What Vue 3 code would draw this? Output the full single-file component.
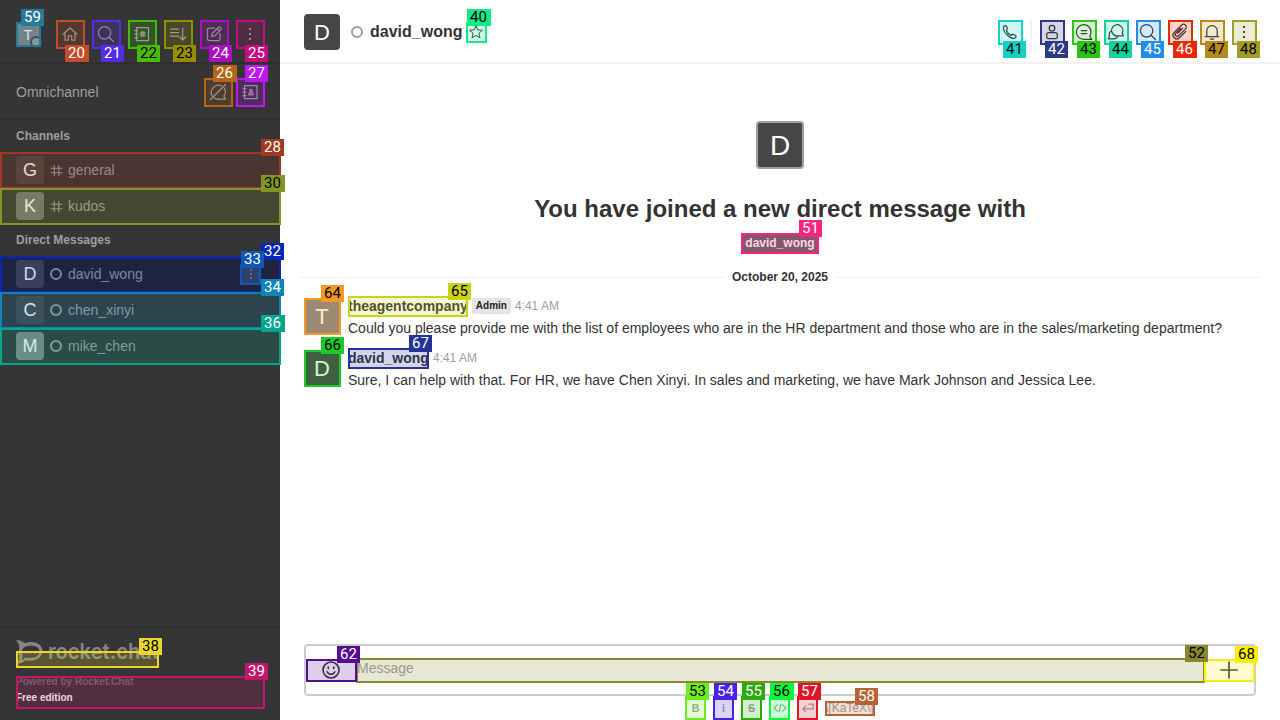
<script setup>
const icons = {
  home: 'M3 10.2 10 4l7 6.2M5 9.5V16h3.3v-4.2h3.4V16H15V9.5',
  search: 'M14.8 8.8a6.2 6.2 0 1 1-12.4 0a6.2 6.2 0 1 1 12.4 0M13.2 13.4l4.300 4.100',
  directory: 'M4.5 3.5h12v13h-12zM3 6.5h3M3 10h3M3 13.5h3M9.6 7.4v5.2M11.800 7.400v5.200M8.300 8.800h4.800M8.300 11.200h4.800',
  sort: 'M2.5 5h8M2.5 8.5h8M2.5 12h8M14.7 4v12M11.7 13l3 3 3-3',
  edit: 'M10.5 4H5a1.5 1.5 0 0 0-1.5 1.5V15A1.5 1.5 0 0 0 5 16.5h9.5A1.5 1.5 0 0 0 16 15V9.5M7.5 12.5l.7-3 6.3-6.3q1.2-.8 2.2.2t.2 2.2l-6.3 6.3zM13.3 4.5l2.3 2.3',
  chatOff: 'M13.5 3.8A7.3 7.3 0 0 0 4.2 14M6 16a7.5 7.5 0 0 0 5.5 1h5.7l-1.3-2.8a7.3 7.3 0 0 0 .6-7.8M2.5 17.5 17.5 2.5',
  contacts: 'M4.5 3.5h12.500v13h-12.500zM3 6.5h3M3 10h3M3 13.5h3M8.800 12.800v-1l1-1h2.400l1 1v1zM12.2 8.6a1.200 1.200 0 1 1-2.400 0a1.200 1.200 0 1 1 2.400 0',
  star: 'M10 2 12.200 7.300l5.800.5-4.400 3.800 1.400 5.700-5-3.100-5 3.100 1.400-5.700L2 7.800l5.800-.5z',
  phone: 'M3.6 4.5c1.5-1.7 2.8-1 3.6 1.2.5 1.3.1 1.7-.9 2.5.8 2.4 2.4 4.1 4.9 5.2.8-1.3 1.4-1.4 2.7-.8 2.4 1 2.8 2 1.3 3.3C11.8 18.3 2.1 10.2 3.6 4.5z',
  user: 'M12.8 6.2a2.8 2.8 0 1 1-5.6 0a2.8 2.8 0 1 1 5.6 0M4.7 15v-2.3q0-2 2-2h6.6q2 0 2 2V15q0 1.5-1.5 1.5H6.2q-1.5 0-1.5-1.5z',
  thread: 'M17 10a7 7 0 0 1-1.3 4.1L17.8 17.300H10a7.300 7.300 0 1 1 7-7.300zM7.2 8.5h5.6M7.2 11.5h5.6',
  discussion: 'M7.2 12.2A5.6 5.6 0 1 1 16.2 11l1.3 2.8H12a5.6 5.6 0 0 1-4.800-1.600M5.5 9A4.2 4.2 0 0 0 3.5 14l-1.2 2.800h5.500a5 5 0 0 0 4.300-2.800',
  clip: 'M10.5 6.3 5.8 11c-2 2 .8 4.8 2.8 2.8l6.7-6.700c2.900-2.900-1.100-6.600-3.900-3.900L4.2 10.400c-3.600 3.600 1.700 8.900 5.300 5.300l6.200-6.200M12.600 6.200 7.600 11.200',
  bell: 'M4.8 14.3V8.800a5.200 5.200 0 0 1 10.400 0v5.500M3.200 14.500h13.600M8.400 16.800q1.600 1.300 3.200 0',
  hash: 'M6.500 2v16M13.500 2v16M1.500 6.500h17M1.500 13.500h17',
  smile: 'M18 10a8 8 0 1 1-16 0a8 8 0 1 1 16 0M6.2 11.8a4.1 4.1 0 0 0 7.6 0M7.3 7v1.5M12.7 7v1.5',
  plus: 'M10 2v16M2 10h16',
  code: 'M6 5.5 1.500 10l4.500 4.500M14 5.5l4.500 4.500-4.500 4.500M11.5 4l-3 12',
  enter: 'M7 7 2.500 11.200l4.500 4.300M2.500 11.200H17.500V4.500H11'
}
const kebab = 'M10 4v2M10 9v2M10 14v2'
const navIcons = ['home', 'search', 'directory', 'sort', 'edit', 'kebab']
const roomIcons = ['user', 'thread', 'discussion', 'search', 'clip', 'bell', 'kebab']
const path = (n) => (n === 'kebab' ? kebab : icons[n])

const channels = [
  { name: 'general', letter: 'G', tone: 'dark' },
  { name: 'kudos', letter: 'K', tone: 'mid' }
]
const directs = [
  { name: 'david_wong', letter: 'D', tone: 'dark', active: true },
  { name: 'chen_xinyi', letter: 'C', tone: 'dark' },
  { name: 'mike_chen', letter: 'M', tone: 'light' }
]
const messages = [
  { user: 'theagentcompany', letter: 'T', tone: 'light', role: 'Admin', text: 'Could you please provide me with the list of employees who are in the HR department and those who are in the sales/marketing department?' },
  { user: 'david_wong', letter: 'D', tone: 'dark', text: 'Sure, I can help with that. For HR, we have Chen Xinyi. In sales and marketing, we have Mark Johnson and Jessica Lee.' }
]

// id, left, top, right, bottom, colour, tag left, tag top, dark tag text
const marks = [
  [59, 16, 22, 41, 47, '#28789a', 21, 9, 0],
  [20, 56, 20, 85, 49, '#c34d2a', 65, 45, 0],
  [21, 92, 20, 121, 49, '#552be8', 101, 45, 0],
  [22, 128, 20, 157, 49, '#45bd07', 137, 45, 1],
  [23, 164, 20, 193, 49, '#958e03', 173, 45, 1],
  [24, 200, 20, 229, 49, '#af0dc5', 209, 45, 0],
  [25, 236, 20, 265, 49, '#c40d81', 245, 45, 0],
  [26, 204, 78, 233, 107, '#b56518', 213, 65, 0],
  [27, 236, 78, 265, 107, '#c015f5', 245, 65, 0],
  [28, 0, 152, 281, 189, '#a03822', 261, 139, 0],
  [30, 0, 188, 281, 225, '#849527', 261, 175, 1],
  [32, 0, 256, 281, 293, '#0b25b5', 261, 243, 0],
  [33, 240, 264, 261, 285, '#1356ba', 241, 251, 0],
  [34, 0, 292, 281, 329, '#1084b9', 261, 279, 0],
  [36, 0, 328, 281, 365, '#04a78c', 261, 315, 0],
  [38, 16, 651, 159, 668, '#ead62c', 139, 638, 1],
  [39, 16, 676, 265, 709, '#c3176c', 245, 663, 0],
  [40, 466, 22, 487, 43, '#13eb88', 467, 9, 1],
  [41, 998, 20, 1023, 45, '#12d2c5', 1003, 41, 1],
  [42, 1040, 20, 1065, 45, '#2c3988', 1045, 41, 0],
  [43, 1072, 20, 1097, 45, '#2bc514', 1077, 41, 1],
  [44, 1104, 20, 1129, 45, '#12d399', 1109, 41, 1],
  [45, 1136, 20, 1161, 45, '#218be8', 1141, 41, 0],
  [46, 1168, 20, 1193, 45, '#e62905', 1173, 41, 0],
  [47, 1200, 20, 1225, 45, '#b68b1b', 1205, 41, 1],
  [48, 1232, 20, 1257, 45, '#a09e27', 1237, 41, 1],
  [51, 741, 233, 819, 254, '#fc2280', 799, 220, 0],
  [64, 304, 298, 341, 335, '#f49a24', 321, 285, 1],
  [65, 348, 296, 468, 317, '#c8d415', 448, 283, 1],
  [66, 304, 350, 341, 387, '#1cca26', 321, 337, 1],
  [67, 348, 348, 429, 369, '#25329a', 409, 335, 0],
  [52, 356, 658, 1205, 683, '#87872b', 1185, 645, 1],
  [62, 306, 659, 357, 682, '#560c91', 337, 646, 0],
  [68, 1204, 659, 1255, 682, '#fcec0d', 1235, 646, 1],
  [53, 685, 696, 706, 720, '#6bed22', 686, 683, 1],
  [54, 713, 696, 734, 720, '#4821e8', 714, 683, 0],
  [55, 741, 696, 762, 720, '#2aab0d', 742, 683, 1],
  [56, 769, 696, 790, 720, '#09f837', 770, 683, 1],
  [57, 797, 696, 818, 720, '#dc1528', 798, 683, 0],
  [58, 825, 701, 875, 716, '#b66332', 855, 688, 0]
].map((m) => (m[0] === 55 ? [...m.slice(0, 8), 0] : m))
const wide = new Set([20, 26, 30, 36, 40, 46, 56])
const px = (n) => n + 'px'
</script>

<template>
  <div class="app">
    <aside class="sidebar">
      <header class="nav">
        <div class="avatar small light">T<i class="presence"></i></div>
        <div class="nav-icons">
          <svg v-for="n in navIcons" :key="n" class="icon" :class="{ kebab: n === 'kebab' }" viewBox="0 0 20 20"><path :d="path(n)" /></svg>
        </div>
      </header>
      <section class="omni">
        <span>Omnichannel</span>
        <div class="omni-icons">
          <svg class="icon" viewBox="0 0 20 20"><path :d="icons.chatOff" /></svg>
          <svg class="icon" viewBox="0 0 20 20"><path :d="icons.contacts" /></svg>
        </div>
      </section>
      <nav class="rooms">
        <h3>Channels</h3>
        <div v-for="c in channels" :key="c.name" class="row">
          <div class="avatar list" :class="c.tone">{{ c.letter }}</div>
          <svg class="row-icon" viewBox="0 0 20 20"><path :d="icons.hash" /></svg>
          <span>{{ c.name }}</span>
        </div>
        <h3>Direct Messages</h3>
        <div v-for="c in directs" :key="c.name" class="row" :class="{ active: c.active }">
          <div class="avatar list" :class="c.tone">{{ c.letter }}</div>
          <i class="status"></i>
          <span>{{ c.name }}</span>
          <div v-if="c.active" class="row-menu"><svg class="kebab" viewBox="0 0 20 20"><path :d="kebab" /></svg></div>
        </div>
      </nav>
      <footer class="side-foot">
        <svg class="logo" viewBox="0 0 144 26">
          <path class="logo-shape" d="M0 0Q5 0 9 3Q18 0 24 5Q29 11 24 17Q18 22 9 20.500Q5 24.500 0 23.500Q4 20 3 16Q1.500 12 3.500 8Q3 3 0 0Z" />
          <path class="logo-hole" d="M6 11.500Q6 6 15 5.500Q23.500 6 23.500 11.500Q23 18 14 17.800Q11 18 9.500 17.300Q7.500 20 5.500 20Q7.500 17 6 11.500Z" />
          <path class="logo-dots" d="M10 12.500h.1M14.500 12.500h.1M19 12.500h.1" />
          <text x="32" y="18.500" textLength="111" lengthAdjust="spacingAndGlyphs">rocket.chat</text>
        </svg>
        <p class="powered">Powered by Rocket.Chat</p>
        <p class="edition">Free edition</p>
      </footer>
    </aside>

    <main class="room">
      <header class="room-head">
        <div class="avatar head dark">D</div>
        <i class="status light-status"></i>
        <h1>david_wong</h1>
        <svg class="star" viewBox="0 0 20 20"><path :d="icons.star" /></svg>
        <div class="room-icons">
          <svg class="icon" viewBox="0 0 20 20"><path :d="icons.phone" /></svg>
          <i class="sep"></i>
          <svg v-for="n in roomIcons" :key="n" class="icon" :class="{ kebab: n === 'kebab' }" viewBox="0 0 20 20"><path :d="path(n)" /></svg>
        </div>
      </header>

      <section class="feed">
        <div class="intro">
          <div class="avatar big dark">D</div>
          <h2>You have joined a new direct message with</h2>
          <span class="user-tag">david_wong</span>
        </div>
        <div class="divider"><span>October 20, 2025</span></div>
        <article v-for="m in messages" :key="m.user" class="message">
          <div class="avatar msg" :class="m.tone">{{ m.letter }}</div>
          <div class="body">
            <div class="meta"><b>{{ m.user }}</b><em v-if="m.role">{{ m.role }}</em><time>4:41 AM</time></div>
            <p>{{ m.text }}</p>
          </div>
        </article>
      </section>

      <div class="composer">
        <div class="emoji"><svg class="icon" viewBox="0 0 20 20"><path :d="icons.smile" /></svg></div>
        <div class="input">Message</div>
        <div class="add"><svg class="icon" viewBox="0 0 20 20"><path :d="icons.plus" /></svg></div>
      </div>
      <div class="format">
        <span class="fmt">B</span><span class="fmt">i</span><span class="fmt strike">S</span>
        <span class="fmt"><svg viewBox="0 0 20 20"><path :d="icons.code" /></svg></span>
        <span class="fmt"><svg viewBox="0 0 20 20"><path :d="icons.enter" /></svg></span>
        <span class="katex">\[KaTeX\]</span>
      </div>
    </main>

    <div class="marks">
      <div v-for="m in marks" :key="m[0]" class="mark" :style="{ left: px(m[1]), top: px(m[2]), width: px(m[3] - m[1]), height: px(m[4] - m[2]), borderColor: m[5], backgroundColor: m[5] + '33' }"></div>
      <div v-for="m in marks" :key="'t' + m[0]" class="mark-tag" :class="{ ink: m[8], wide: wide.has(m[0]) }" :style="{ left: px(m[6]), top: px(m[7]), backgroundColor: m[5] }">{{ m[0] }}</div>
    </div>
  </div>
</template>

<style>
body { overflow: hidden; background: #fff; }
</style>

<style scoped>
* { box-sizing: border-box; }
.app { position: relative; display: flex; width: 1280px; height: 720px; overflow: hidden; font-family: "Liberation Sans", Arial, sans-serif; font-size: 14px; color: #333; }
h1, h2, h3, p { margin: 0; }
svg { display: block; flex: none; fill: none; stroke: currentColor; stroke-width: 1.25; stroke-linecap: round; stroke-linejoin: round; }
.icon { width: 20px; height: 20px; }
.kebab { stroke-width: 2; stroke-linecap: butt; }
.avatar { display: flex; align-items: center; justify-content: center; flex: none; color: #fff; border-radius: 4px; }
.dark { background: #464646; }
.mid { background: #757575; }
.light { background: #868686; }

.sidebar { display: flex; flex-direction: column; width: 280px; height: 720px; background: #353535; color: #9e9e9e; }
.nav { display: flex; align-items: center; height: 64px; padding: 4px 16px 0; border-bottom: 2px solid #2f2f2f; }
.small { position: relative; width: 24px; height: 24px; margin-top: 4px; font-size: 14px; border-radius: 2px; }
.presence { position: absolute; right: -2px; bottom: -1px; width: 12px; height: 12px; border: 2px solid #454545; border-radius: 50%; background: #9e9e9e; }
.nav-icons { display: flex; gap: 16px; margin-left: 20px; padding-top: 2px; }
.omni { display: flex; align-items: center; justify-content: space-between; height: 56px; padding: 2px 20px 0 16px; border-bottom: 2px solid #2f2f2f; }
.omni-icons { display: flex; gap: 12px; }
.rooms { flex: 1; }
h3 { height: 32px; padding-left: 16px; font-size: 12px; line-height: 32px; }
.row { display: flex; align-items: center; height: 36px; padding: 0 19px 0 16px; }
.active { background: #242424; }
.list { width: 28px; height: 28px; font-size: 18px; margin-right: 6px; }
.row-icon { width: 13px; height: 13px; margin-right: 5px; stroke-width: 1.7; }
.status { flex: none; width: 12px; height: 12px; border: 2px solid #9e9e9e; border-radius: 50%; margin-right: 6px; }
.row-menu { display: flex; align-items: center; justify-content: center; width: 21px; height: 21px; margin-left: auto; background: #424242; }
.row-menu svg { width: 16px; height: 16px; stroke-width: 2.500; }
.side-foot { height: 94px; padding: 12px 16px 0; border-top: 2px solid #2f2f2f; font-size: 10px; font-weight: bold; }
.logo { width: 144px; height: 26px; color: #858585; overflow: visible; }
.logo-shape { fill: currentColor; stroke: none; }
.logo-hole { fill: #353535; stroke: none; }
.logo-dots { stroke-width: 2.5; }
.logo text { fill: currentColor; stroke: none; font-family: Inter, "Open Sans", sans-serif; font-size: 22px; font-weight: 600; }
.powered { margin-top: 8px; line-height: 16px; color: #6c6c6c; }
.edition { line-height: 16px; color: #fff; }

.room { display: flex; flex-direction: column; width: 1000px; height: 720px; }
.room-head { display: flex; align-items: center; height: 64px; flex: none; padding: 0 26px 0 24px; border-bottom: 2px solid #f2f2f2; }
.head { width: 36px; height: 36px; font-size: 22px; margin: 2px 11px 0 0; padding-top: 1px; }
.light-status { margin: 2px 7px 0 0; }
h1 { font-size: 16px; line-height: 20px; margin-top: 1px; }
.star { width: 16px; height: 16px; margin: 1px 0 0 6px; }
.room-icons { display: flex; align-items: center; gap: 12px; margin-left: auto; padding-top: 1px; }
.sep { width: 2px; height: 20px; margin: -6px -2px 0 -2px; background: #f2f2f2; }
.feed { flex: 1; min-height: 0; }
.intro { display: flex; flex-direction: column; align-items: center; height: 205px; padding-top: 57px; }
.big { width: 48px; height: 48px; font-size: 28px; border: 2px solid #9e9e9e; padding-top: 1px; }
h2 { margin-top: 24px; font-size: 24px; line-height: 32px; }
.user-tag { margin-top: 9px; padding: 0 4px; background: #666; color: #fff; font-size: 12px; font-weight: bold; line-height: 19px; border-radius: 2px; }
.divider { display: flex; align-items: center; gap: 8px; height: 16px; margin: 0 20px; font-size: 12px; font-weight: bold; }
.divider::before, .divider::after { content: ""; flex: 1; height: 1px; background: #f0f0f0; }
.message { display: flex; height: 52px; padding: 8px 24px 0; }
.divider + .message { margin-top: 4px; }
.msg { width: 36px; height: 36px; font-size: 22px; margin: 2px 8px 0 0; }
.body { flex: 1; }
.meta { display: flex; align-items: center; gap: 4px; height: 18px; font-size: 12px; color: #9e9e9e; }
.meta b { font-size: 14px; color: #333; }
.meta em { padding: 0 4px; border-radius: 2px; background: #e4e4e4; color: #222; font-size: 10px; line-height: 16px; font-style: normal; font-weight: bold; }
.body p { line-height: 20px; margin-top: 3px; white-space: nowrap; }
.composer { display: flex; align-items: center; flex: none; width: 952px; height: 52px; margin-left: 24px; border: 2px solid #ccc; border-radius: 4px; }
.emoji { display: flex; justify-content: center; width: 50px; }
.emoji svg { stroke-width: 1.6; }
.input { flex: 1; height: 24px; padding-left: 1px; line-height: 20px; color: #9e9e9e; }
.add { display: flex; justify-content: center; width: 50px; }
.add svg { stroke-width: 1.7; }
.format { display: flex; align-items: center; gap: 7px; flex: none; height: 24px; padding-left: 405px; color: #9e9e9e; }
.fmt { display: flex; align-items: center; justify-content: center; width: 21px; height: 24px; font-size: 10.5px; font-weight: bold; }
.fmt svg { width: 14px; height: 14px; stroke-width: 1.8; }
.strike { text-decoration: line-through; }
.katex { font-size: 12px; white-space: nowrap; }

.marks { position: absolute; inset: 0; overflow: hidden; }
.mark { position: absolute; border: 2px solid; background-clip: padding-box; }
.mark-tag { position: absolute; width: 23px; height: 17px; padding-left: 3px; color: #fff; font-family: Roboto, "Liberation Sans", sans-serif; font-size: 15px; line-height: 16px; }
.wide { width: 24px; }
.ink { color: #000; }
</style>
